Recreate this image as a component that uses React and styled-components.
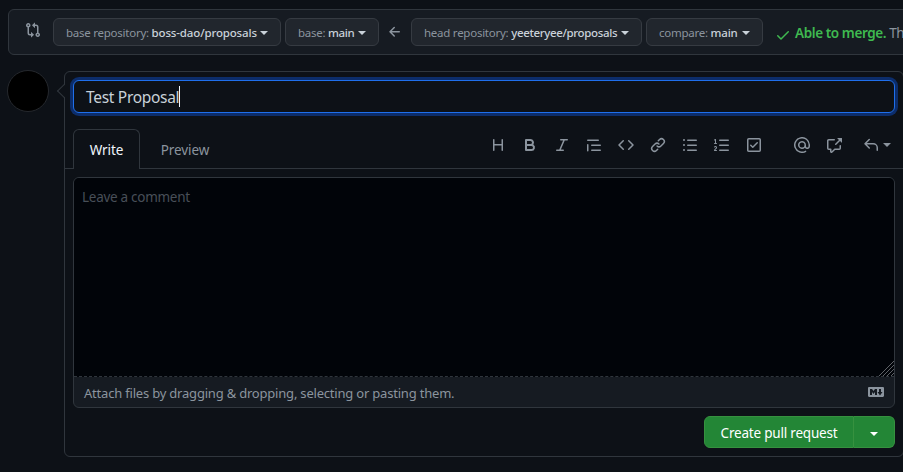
import React from "react";
import styled, { createGlobalStyle } from "styled-components";

const GlobalStyle = createGlobalStyle`
  *, *::before, *::after { box-sizing: border-box; }
  body {
    margin: 0;
    overflow: hidden;
    background: #0d1117;
    color: #c9d1d9;
    font-family: "Noto Sans", sans-serif;
    font-size: 14px;
    line-height: 1.5;
  }
`;

const paths = {
  compare:
    "M9.573.677L7.177 3.073a.25.25 0 000 .354l2.396 2.396A.25.25 0 0010 5.646V4h1a1 1 0 011 1v5.628a2.251 2.251 0 101.5 0V5A2.5 2.5 0 0011 2.5h-1V.854a.25.25 0 00-.427-.177zM6 12v-1.646a.25.25 0 01.427-.177l2.396 2.396a.25.25 0 010 .354l-2.396 2.396A.25.25 0 016 15.146V13.5H5A2.5 2.5 0 012.5 11V5.372a2.25 2.25 0 111.5 0V11a1 1 0 001 1h1zm6.75 0a.75.75 0 100 1.5.75.75 0 000-1.5zM4 3.25a.75.75 0 11-1.5 0 .75.75 0 011.5 0z",
  arrowLeft:
    "M7.78 12.53a.75.75 0 01-1.06 0L2.47 8.28a.75.75 0 010-1.06l4.25-4.25a.75.75 0 011.06 1.06L4.81 7h7.44a.75.75 0 010 1.5H4.81l2.97 2.97a.75.75 0 010 1.06z",
  check:
    "M13.78 4.22a.75.75 0 010 1.06l-7.25 7.25a.75.75 0 01-1.06 0L2.22 9.28a.75.75 0 011.06-1.06L6 10.94l6.72-6.72a.75.75 0 011.06 0z",
  heading:
    "M3.75 2a.75.75 0 01.75.75V7h7V2.75a.75.75 0 011.5 0v10.5a.75.75 0 01-1.5 0V8.5h-7v4.75a.75.75 0 01-1.5 0V2.75A.75.75 0 013.75 2z",
  bold: "M4 2a1 1 0 00-1 1v10a1 1 0 001 1h5.5a3.5 3.5 0 001.852-6.47A3.5 3.5 0 008.5 2H4zm4.5 5a1.5 1.5 0 100-3H5v3h3.5zM5 9v3h4.5a1.5 1.5 0 000-3H5z",
  italic:
    "M6 2.75A.75.75 0 016.75 2h6.5a.75.75 0 010 1.5h-2.505l-3.858 9H9.25a.75.75 0 010 1.5h-6.5a.75.75 0 010-1.5h2.505l3.858-9H6.75A.75.75 0 016 2.75z",
  quote:
    "M1.75 2.5a.75.75 0 000 1.5h10.5a.75.75 0 000-1.5H1.75zm4 5a.75.75 0 000 1.5h8.5a.75.75 0 000-1.5h-8.5zm0 5a.75.75 0 000 1.5h8.5a.75.75 0 000-1.5h-8.5zM2.5 7.75a.75.75 0 00-1.5 0v6a.75.75 0 001.5 0v-6z",
  code: "M4.72 3.22a.75.75 0 011.06 1.06L2.06 8l3.72 3.72a.75.75 0 11-1.06 1.06L.47 8.53a.75.75 0 010-1.06l4.25-4.25zm6.56 0a.75.75 0 10-1.06 1.06L13.94 8l-3.72 3.72a.75.75 0 101.06 1.06l4.25-4.25a.75.75 0 000-1.06l-4.25-4.25z",
  link: "M7.775 3.275a.75.75 0 001.06 1.06l1.25-1.25a2 2 0 112.83 2.83l-2.5 2.5a2 2 0 01-2.83 0 .75.75 0 00-1.06 1.06 3.5 3.5 0 004.95 0l2.5-2.5a3.5 3.5 0 00-4.95-4.95l-1.25 1.25zm-4.69 9.64a2 2 0 010-2.83l2.5-2.5a2 2 0 012.83 0 .75.75 0 001.06-1.06 3.5 3.5 0 00-4.95 0l-2.5 2.5a3.5 3.5 0 004.95 4.95l1.25-1.25a.75.75 0 00-1.06-1.06l-1.25 1.25a2 2 0 01-2.83 0z",
  bullets:
    "M2 4a1 1 0 100-2 1 1 0 000 2zm3.75-1.5a.75.75 0 000 1.5h8.5a.75.75 0 000-1.5h-8.5zm0 5a.75.75 0 000 1.5h8.5a.75.75 0 000-1.5h-8.5zm0 5a.75.75 0 000 1.5h8.5a.75.75 0 000-1.5h-8.5zM3 8a1 1 0 11-2 0 1 1 0 012 0zm-1 6a1 1 0 100-2 1 1 0 000 2z",
  numbers:
    "M2.003 2.5a.5.5 0 00-.723-.447l-1.003.5a.5.5 0 00.446.895l.28-.14V6H.5a.5.5 0 000 1h2.006a.5.5 0 100-1h-.503V2.5zM5 3.25a.75.75 0 01.75-.75h8.5a.75.75 0 010 1.5h-8.5A.75.75 0 015 3.25zm0 5a.75.75 0 01.75-.75h8.5a.75.75 0 010 1.5h-8.5A.75.75 0 015 8.25zm0 5a.75.75 0 01.75-.75h8.5a.75.75 0 010 1.5h-8.5a.75.75 0 01-.75-.75zM.924 10.32l.003-.004a.851.851 0 01.144-.153A.66.66 0 011.5 10c.195 0 .306.068.374.146a.57.57 0 01.128.376c0 .453-.269.682-.8 1.078l-.035.025C.692 11.98 0 12.495 0 13.5a.5.5 0 00.5.5h2.003a.5.5 0 000-1H1.146c.132-.197.351-.372.654-.597l.047-.035c.47-.35 1.156-.858 1.156-1.845 0-.365-.118-.744-.377-1.038-.268-.303-.658-.484-1.126-.484-.48 0-.84.202-1.068.392a1.858 1.858 0 00-.348.384l-.007.011-.002.004-.001.002-.001.001a.5.5 0 00.851.525z",
  tasks:
    "M2.5 2.75a.25.25 0 01.25-.25h10.5a.25.25 0 01.25.25v10.5a.25.25 0 01-.25.25H2.75a.25.25 0 01-.25-.25V2.75zM2.75 1A1.75 1.75 0 001 2.75v10.5c0 .966.784 1.75 1.75 1.75h10.5A1.75 1.75 0 0015 13.25V2.75A1.75 1.75 0 0013.25 1H2.75zm9.03 5.28a.75.75 0 00-1.06-1.06L6.75 9.19 5.28 7.72a.75.75 0 00-1.06 1.06l2 2a.75.75 0 001.06 0l4.5-4.5z",
  mention:
    "M4.75 2.37a6.5 6.5 0 006.5 11.26.75.75 0 01.75 1.298 8 8 0 113.994-7.273.754.754 0 01.006.095v1.5a2.75 2.75 0 01-5.072 1.475A4 4 0 1112 8v1.25a1.25 1.25 0 002.5 0V7.867a6.5 6.5 0 00-9.75-5.496V2.37zM10.5 8a2.5 2.5 0 10-5 0 2.5 2.5 0 005 0z",
  crossReference:
    "M16 1.25v4.146a.25.25 0 01-.427.177L14.03 4.03l-3.75 3.75a.75.75 0 11-1.06-1.06l3.75-3.75-1.543-1.543A.25.25 0 0111.604 1h4.146a.25.25 0 01.25.25zM2.75 3.5a.25.25 0 00-.25.25v7.5c0 .138.112.25.25.25h2a.75.75 0 01.75.75v2.19l2.72-2.72a.75.75 0 01.53-.22h4.5a.25.25 0 00.25-.25v-2.5a.75.75 0 111.5 0v2.5A1.75 1.75 0 0113.25 13H9.06l-2.573 2.573A1.457 1.457 0 014 14.543V13H2.75A1.75 1.75 0 011 11.25v-7.5C1 2.784 1.784 2 2.75 2h5.5a.75.75 0 010 1.5h-5.5z",
  reply:
    "M6.78 1.97a.75.75 0 010 1.06L3.81 6h6.44A4.75 4.75 0 0115 10.75v2.5a.75.75 0 01-1.5 0v-2.5a3.25 3.25 0 00-3.25-3.25H3.81l2.97 2.97a.75.75 0 11-1.06 1.06L1.47 7.28a.75.75 0 010-1.06l4.25-4.25a.75.75 0 011.06 0z",
  markdown:
    "M14.85 3H1.15C.52 3 0 3.52 0 4.15v7.69C0 12.48.52 13 1.15 13h13.69c.64 0 1.15-.52 1.15-1.15v-7.7C16 3.52 15.48 3 14.85 3zM9 11H7V8L5.5 9.92 4 8v3H2V5h2l1.5 2L7 5h2v6zm2.99.5L9.5 8H11V5h2v3h1.5l-2.51 3.5z",
};

const Svg = styled.svg`
  display: block;
  flex: none;
  fill: currentColor;
`;

function Icon({ name, className }) {
  return (
    <Svg className={className} width="16" height="16" viewBox="0 0 16 16" fillRule="evenodd" aria-hidden="true">
      <path d={paths[name]} />
    </Svg>
  );
}

const Page = styled.main`
  height: 472px;
  padding-top: 9px;
  overflow: hidden;
`;

const RangeEditor = styled.section`
  display: flex;
  align-items: flex-start;
  width: 960px;
  height: 46px;
  margin-left: 8px;
  padding: 8px 0 0 16px;
  border: 1px solid #30363d;
  border-radius: 6px;
  background: #161b22;
  color: #8b949e;
`;

const CompareIcon = styled(Icon)`
  margin: 4px 12px 0 0;
`;

const Caret = styled.span`
  flex: none;
  width: 0;
  height: 0;
  border: 4px solid transparent;
  border-top-color: currentColor;
  border-bottom-width: 0;
`;

const RefButton = styled.button`
  display: flex;
  align-items: center;
  flex: none;
  width: ${(p) => p.$width}px;
  height: 28px;
  margin-right: 4px;
  padding: 2px 12px 0;
  border: 1px solid #363b42;
  border-radius: 6px;
  background: #21262d;
  color: #c9d1d9;
  font: 500 11.5px/20px "Noto Sans", sans-serif;
  white-space: pre;

  ${Caret} { margin-left: auto; }
`;

const RefLabel = styled.span`
  color: #8b949e;
  font-weight: 400;
  letter-spacing: -0.25px;
`;

const RefValue = styled.span`
  letter-spacing: ${(p) => p.$tracking}px;
`;

const ArrowIcon = styled(Icon)`
  margin: 6px 8px 0 4px;
`;

const MergeStatus = styled.p`
  display: flex;
  margin: 4px 0 0 8px;
  font-size: 13.5px;
  letter-spacing: -0.4px;
  line-height: 22px;
  white-space: pre;
`;

const MergeCheck = styled(Icon)`
  margin: 5px 4px 0 0;
  color: #3fb950;
`;

const MergeGood = styled.strong`
  color: #3fb950;
  font-weight: 600;
`;

const Discussion = styled.section`
  display: flex;
  align-items: flex-start;
  margin-top: 16px;
`;

const Avatar = styled.div`
  flex: none;
  width: 42px;
  height: 42px;
  margin: -1px 15px 0 7px;
  border: 1px solid #25282d;
  border-radius: 50%;
  background: #000;
`;

const CommentForm = styled.form`
  position: relative;
  flex: none;
  width: 840px;
  height: 386px;
  padding-top: 8px;
  border: 1px solid #30363d;
  border-radius: 6px;

  /* speech-bubble pointer toward the avatar */
  &::before {
    content: "";
    position: absolute;
    top: 14px;
    left: -6px;
    width: 10px;
    height: 10px;
    border: solid #30363d;
    border-width: 0 0 1px 1px;
    background: linear-gradient(45deg, #0d1117 60%, transparent 60%);
    transform: rotate(45deg);
  }
`;

const TitleField = styled.div`
  position: relative;
  display: flex;
  align-items: center;
  height: 33px;
  margin: 0 8px;
  padding: 1px 0 0 12px;
  border: 1px solid #1f6feb;
  border-radius: 6px;
  background: #0d1117;
  box-shadow: 0 0 0 3px #0c2d6b;
  font-size: 15.5px;
  line-height: 24px;
  letter-spacing: -0.3px;
`;

const TextCursor = styled.span`
  width: 1px;
  height: 21px;
  margin-top: -2px;
  background: #f0f6fc;
`;

const TabBar = styled.div`
  display: flex;
  align-items: flex-start;
  height: 40px;
  margin-top: 16px;
  padding: 0 8px;
  border-bottom: 1px solid #30363d;
`;

const Tab = styled.button`
  height: 40px;
  width: ${(p) => (p.$selected ? 67 : 90)}px;
  padding: 1px 0 0;
  border: 1px solid ${(p) => (p.$selected ? "#30363d" : "transparent")};
  border-bottom: 0;
  border-radius: 6px 6px 0 0;
  background: ${(p) => (p.$selected ? "#0d1117" : "transparent")};
  color: ${(p) => (p.$selected ? "#f0f6fc" : "#8b949e")};
  font: 13.5px/20px "Noto Sans", sans-serif;
  letter-spacing: -0.1px;
`;

const Toolbar = styled.div`
  display: flex;
  gap: 16px;
  margin: 8px 4px 0 auto;
  color: #8b949e;
`;

const ToolGroup = styled.div`
  display: flex;
  gap: 16px;
  margin-right: ${(p) => (p.$spaced ? 16 : 0)}px;
`;

const ToolButton = styled.button`
  display: flex;
  align-items: center;
  gap: 4px;
  height: 16px;
  margin-left: ${(p) => (p.$menu ? 5 : 0)}px;
  padding: 0;
  border: 0;
  background: none;
  color: inherit;
`;

const Editor = styled.div`
  height: 231px;
  margin: 8px 8px 0;
  border: 1px solid #30363d;
  border-radius: 6px;
  overflow: hidden;
  background: #161b22;
`;

const CommentArea = styled.div`
  display: flex;
  justify-content: space-between;
  height: 199px;
  padding-left: 8px;
  border-bottom: 1px dashed #30363d;
  background: #010409;
  color: #484f58;
`;

const Placeholder = styled.span`
  padding-top: 9px;
  font-size: 13.5px;
  letter-spacing: -0.28px;
`;

const ResizeGrip = styled.svg`
  align-self: flex-end;
  stroke: #777b80;
  stroke-width: 0.8;
`;

const AttachBar = styled.div`
  display: flex;
  align-items: center;
  justify-content: space-between;
  height: 30px;
  padding: 3px 10px 0;
  color: #8b949e;
  font-size: 13px;
  letter-spacing: -0.2px;
`;

const MarkdownIcon = styled(Icon)`
  margin-top: -4px;
`;

const Actions = styled.div`
  display: flex;
  justify-content: flex-end;
  margin: 8px 8px 0;
`;

const PrimaryButton = styled.button`
  display: flex;
  align-items: center;
  justify-content: center;
  width: ${(p) => (p.$menu ? 41 : 150)}px;
  height: 32px;
  padding: ${(p) => (p.$menu ? 3 : 2)}px 0 0;
  border: 1px solid #36913f;
  border-left-width: ${(p) => (p.$menu ? 0 : 1)}px;
  border-radius: ${(p) => (p.$menu ? "0 6px 6px 0" : "6px 0 0 6px")};
  background: #238636;
  color: #fff;
  font: 400 13.5px/20px "Noto Sans", sans-serif;
  letter-spacing: -0.2px;
`;

const refs = {
  base: [
    { label: "base repository: ", value: "boss-dao/proposals", width: 228, tracking: -0.15 },
    { label: "base: ", value: "main", width: 94, tracking: -0.4 },
  ],
  head: [
    { label: "head repository: ", value: "yeeteryee/proposals", width: 231, tracking: -0.35 },
    { label: "compare: ", value: "main", width: 117, tracking: -0.2 },
  ],
};

function RefPicker({ label, value, width, tracking }) {
  return (
    <RefButton type="button" $width={width}>
      <RefLabel>{label}</RefLabel>
      <RefValue $tracking={tracking}>{value}</RefValue>
      <Caret />
    </RefButton>
  );
}

const formatTools = ["heading", "bold", "italic", "quote", "code", "link", "bullets", "numbers", "tasks"];

export default function App() {
  return (
    <>
      <GlobalStyle />
      <Page>
        <RangeEditor>
          <CompareIcon name="compare" />
          {refs.base.map((r) => <RefPicker key={r.label} {...r} />)}
          <ArrowIcon name="arrowLeft" />
          {refs.head.map((r) => <RefPicker key={r.label} {...r} />)}
          <MergeStatus>
            <MergeCheck name="check" />
            <MergeGood>Able to merge.</MergeGood>
            <span> These branches</span>
          </MergeStatus>
        </RangeEditor>
        <Discussion>
          <Avatar />
          <CommentForm>
            <TitleField>
              Test Proposal
              <TextCursor />
            </TitleField>
            <TabBar>
              <Tab type="button" $selected>Write</Tab>
              <Tab type="button">Preview</Tab>
              <Toolbar>
                <ToolGroup $spaced>
                  {formatTools.map((t) => (
                    <ToolButton type="button" key={t}><Icon name={t} /></ToolButton>
                  ))}
                </ToolGroup>
                <ToolGroup>
                  <ToolButton type="button"><Icon name="mention" /></ToolButton>
                  <ToolButton type="button"><Icon name="crossReference" /></ToolButton>
                </ToolGroup>
                <ToolButton type="button" $menu><Icon name="reply" /><Caret /></ToolButton>
              </Toolbar>
            </TabBar>
            <Editor>
              <CommentArea>
                <Placeholder>Leave a comment</Placeholder>
                <ResizeGrip width="15" height="15" viewBox="0 0 15 15">
                  <path d="M0 15L15 0M4 15L15 4M8 15L15 8M12 15L15 12" />
                </ResizeGrip>
              </CommentArea>
              <AttachBar>
                <span>Attach files by dragging &amp; dropping, selecting or pasting them.</span>
                <MarkdownIcon name="markdown" />
              </AttachBar>
            </Editor>
            <Actions>
              <PrimaryButton type="button">Create pull request</PrimaryButton>
              <PrimaryButton type="button" $menu><Caret /></PrimaryButton>
            </Actions>
          </CommentForm>
        </Discussion>
      </Page>
    </>
  );
}
